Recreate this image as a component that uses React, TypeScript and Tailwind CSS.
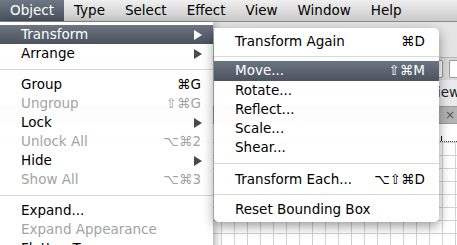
import React from 'react';

type Item =
  | { kind: 'sep'; h?: string }
  | { kind: 'item'; label: string; key?: string; arrow?: boolean; disabled?: boolean; active?: boolean; h?: string };

const objectMenu: Item[] = [
  { kind: 'item', label: 'Transform', arrow: true, active: true },
  { kind: 'item', label: 'Arrange', arrow: true },
  { kind: 'sep' },
  { kind: 'item', label: 'Group', key: '⌘G' },
  { kind: 'item', label: 'Ungroup', key: '⇧⌘G', disabled: true },
  { kind: 'item', label: 'Lock', arrow: true },
  { kind: 'item', label: 'Unlock All', key: '⌥⌘2', disabled: true },
  { kind: 'item', label: 'Hide', arrow: true },
  { kind: 'item', label: 'Show All', key: '⌥⌘3', disabled: true },
  { kind: 'sep' },
  { kind: 'item', label: 'Expand...' },
  { kind: 'item', label: 'Expand Appearance', disabled: true },
  { kind: 'item', label: 'Flatten Transparency...' },
];

const transformMenu: Item[] = [
  { kind: 'item', label: 'Transform Again', key: '⌘D' },
  { kind: 'sep', h: 'h-[10px]' },
  { kind: 'item', label: 'Move...', key: '⇧⌘M', active: true, h: 'h-[20px]' },
  { kind: 'item', label: 'Rotate...' },
  { kind: 'item', label: 'Reflect...' },
  { kind: 'item', label: 'Scale...' },
  { kind: 'item', label: 'Shear...' },
  { kind: 'sep', h: 'h-[13px]' },
  { kind: 'item', label: 'Transform Each...', key: '⌥⇧⌘D' },
  { kind: 'sep', h: 'h-[11px]' },
  { kind: 'item', label: 'Reset Bounding Box' },
];

const font = { fontFamily: '"DejaVu Sans", "Liberation Sans", sans-serif' };

function MenuRows({ items, padLeft, padRight }: { items: Item[]; padLeft: string; padRight: string }) {
  return (
    <>
      {items.map((it, i) => {
        if (it.kind === 'sep') {
          return (
            <div key={i} className={`${it.h ?? 'h-[12px]'} flex items-center`}>
              <div className="h-px w-full bg-[#d9d9d9]" />
            </div>
          );
        }
        const color = it.active ? 'text-white' : it.disabled ? 'text-[#a3a3a3]' : 'text-black';
        return (
          <div
            key={i}
            className={`${it.h ?? 'h-[19px]'} flex items-center justify-between ${padLeft} ${padRight} ${color} ${
              it.active ? 'bg-gradient-to-b from-[#6c7682] to-[#4a535e]' : ''
            }`}
          >
            <span className="whitespace-nowrap">{it.label}</span>
            {it.key && <span className="whitespace-nowrap">{it.key}</span>}
            {it.arrow && (
              <svg width="8" height="10" viewBox="0 0 8 10" className="mr-[-1px]">
                <path d="M0 0 L8 5 L0 10 Z" fill={it.active ? '#ffffff' : '#4a4a4a'} />
              </svg>
            )}
          </div>
        );
      })}
    </>
  );
}

export default function App() {
  const bar = ['Object', 'Type', 'Select', 'Effect', 'View', 'Window', 'Help'];
  return (
    <div className="relative w-[457px] h-[245px] overflow-hidden bg-white text-[13.5px] leading-none" style={font}>
      {/* menu bar */}
      <div className="h-[22px] flex items-stretch bg-gradient-to-b from-[#f0f0f0] to-[#c9c9c9] border-b border-[#8c8c8c]">
        {bar.map((b, i) => (
          <div
            key={b}
            className={`flex items-center px-[10px] ${
              i === 0 ? 'bg-gradient-to-b from-[#6e7884] to-[#47505b] text-white' : 'text-black'
            }`}
          >
            {b}
          </div>
        ))}
      </div>

      {/* document window behind the menus */}
      <div className="flex flex-col">
        <div className="h-[36px] bg-[#e4e4e4] border-b border-[#b8b8b8]" />
        <div className="h-[22px] bg-[#d9d9d9] flex items-center justify-end gap-[6px]">
          <div className="w-[14px] h-[18px] bg-white border border-[#9a9a9a] rounded-[2px]" />
          <div className="w-[8px] h-[18px] bg-white border border-[#9a9a9a] rounded-l-[2px] border-r-0" />
        </div>
        <div className="h-[26px] bg-[#ebebeb] flex items-center justify-end">
          <div className="w-[18px] overflow-hidden flex justify-end">
            <span className="text-[13.5px] text-[#222] whitespace-nowrap mr-[-3px]">Preview</span>
          </div>
        </div>
        <div className="h-[18px] bg-[#b4b4b4] border-y border-[#9a9a9a] flex items-center justify-end pr-[2px] gap-[8px] text-[#555] text-[12px]">
          <span>»</span>
          <span>×</span>
        </div>
        <div className="h-[18px] bg-white border-b border-dotted border-[#444] relative">
          <div className="absolute left-[441px] bottom-0 w-px h-[5px] bg-black" />
        </div>
        <div className="h-[140px] bg-white bg-[linear-gradient(to_right,#d2d2d2_1px,transparent_1px),linear-gradient(to_bottom,#d2d2d2_1px,transparent_1px)] bg-[size:13px_13px]" />
      </div>

      {/* Object menu */}
      <div className="absolute left-0 top-[22px] w-[213px] h-[240px] pt-[3px] bg-white/[0.97] shadow-[2px_2px_8px_rgba(0,0,0,0.35)]">
        <MenuRows items={objectMenu} padLeft="pl-[21px]" padRight="pr-[12px]" />
      </div>

      {/* Transform submenu */}
      <div className="absolute left-[214px] top-[28px] w-[225px] pt-[4px] pb-[3px] bg-white/[0.97] rounded-[5px] rounded-tl-none shadow-[0_4px_12px_rgba(0,0,0,0.4)]">
        <MenuRows items={transformMenu} padLeft="pl-[21px]" padRight="pr-[14px]" />
      </div>
    </div>
  );
}
